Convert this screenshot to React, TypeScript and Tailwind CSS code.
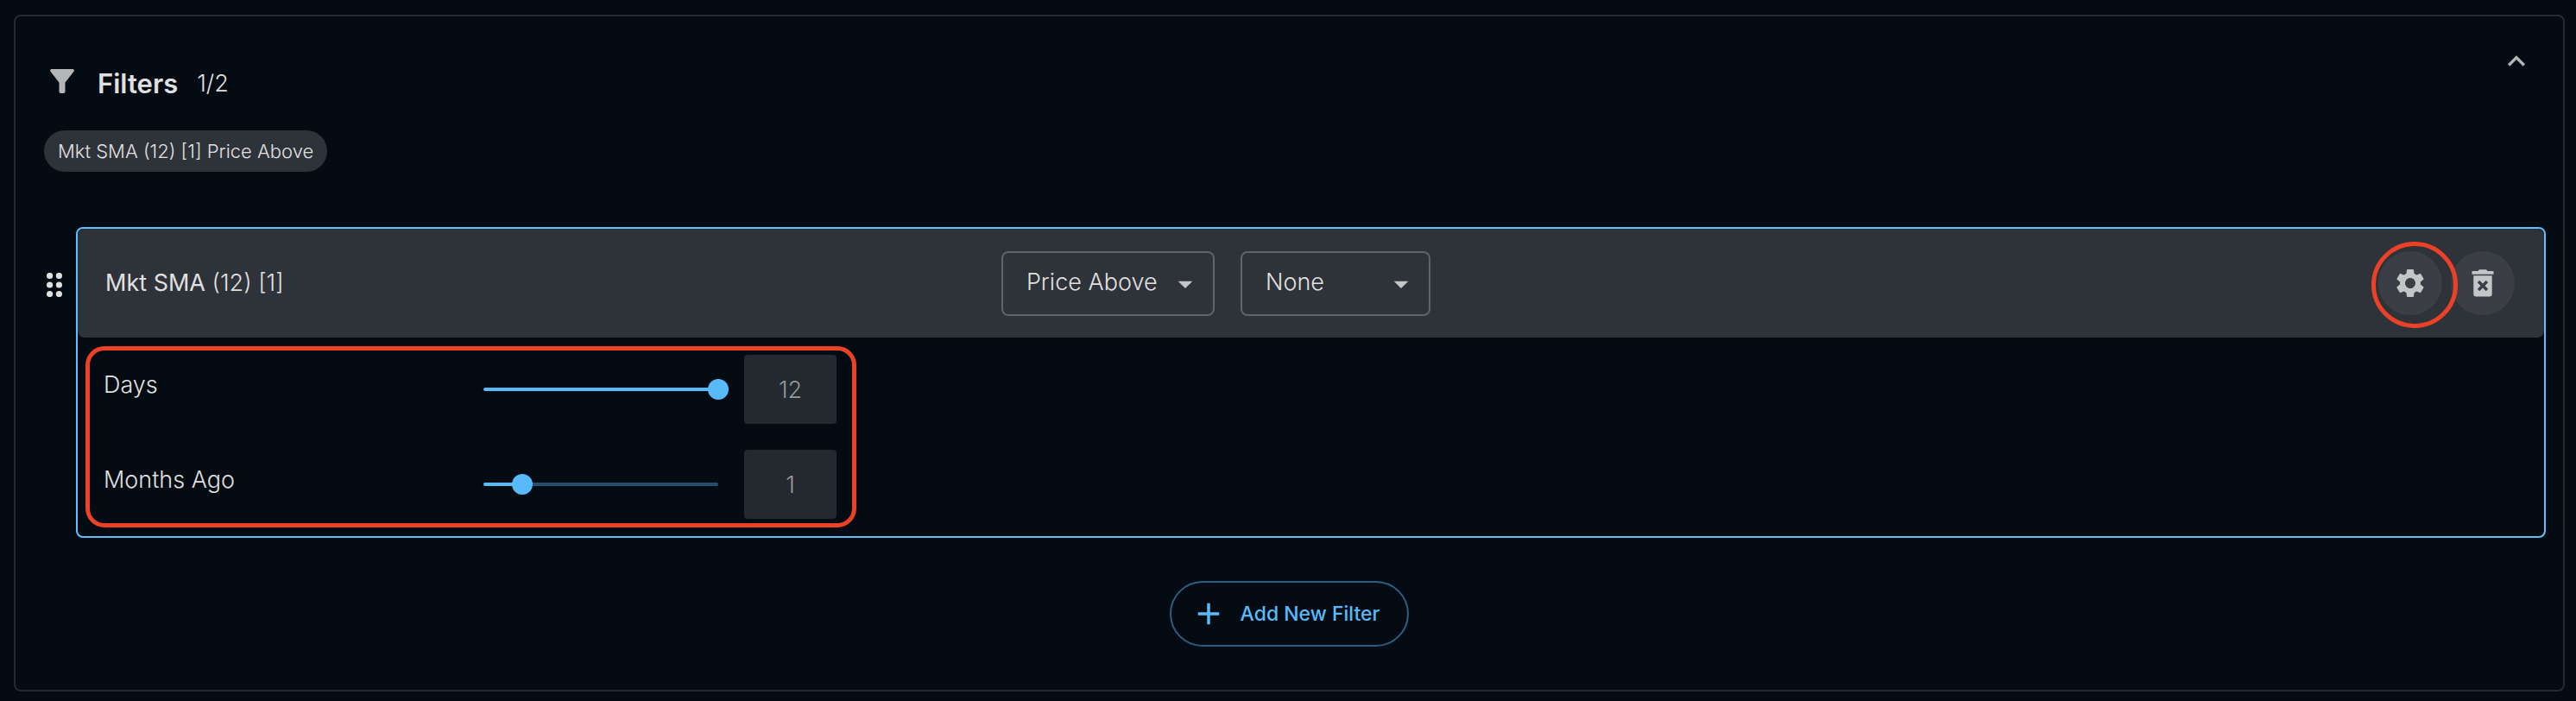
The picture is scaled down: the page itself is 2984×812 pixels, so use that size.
import { useState } from "react";
import { MdAdd, MdArrowDropDown, MdExpandLess, MdFilterAlt, MdSettings } from "react-icons/md";

interface ParamRowProps {
    id: string;
    label: string;
    value: number;
    max: number;
    onChange: (value: number) => void;
}

function ParamRow({ id, label, value, max, onChange }: ParamRowProps) {
    const fill = `${(value / max) * 100}%`;

    return (
        <div className="flex h-20 items-center">
            <label htmlFor={id} className="w-[428px] pb-2.5 text-[27px] leading-8">
                {label}
            </label>

            {/* Thumb overhangs the track by 12px on both sides */}
            <div className="relative flex h-6 w-[296px] items-center px-3">
                <div className="h-1 w-full overflow-hidden rounded-full bg-[#22506e]">
                    <div className="h-full bg-[#57bbfb]" style={{ width: fill }} />
                </div>
                <input
                    id={id}
                    type="range"
                    min={0}
                    max={max}
                    value={value}
                    onChange={(e) => onChange(Number(e.target.value))}
                    className="absolute inset-0 h-6 w-full cursor-pointer appearance-none bg-transparent [&::-webkit-slider-thumb]:size-6 [&::-webkit-slider-thumb]:appearance-none [&::-webkit-slider-thumb]:rounded-full [&::-webkit-slider-thumb]:bg-[#57bbfb]"
                />
            </div>

            <input
                type="text"
                aria-label={`${label} value`}
                value={value}
                disabled
                className="ml-[18px] h-20 w-[107px] rounded bg-[#23292f] text-center text-[27px] text-[#96999b]"
            />
        </div>
    );
}

interface SelectBoxProps {
    label: string;
    options: string[];
    className: string;
}

function SelectBox({ label, options, className }: SelectBoxProps) {
    return (
        <div className={`relative shrink-0 ${className}`}>
            <select
                aria-label={label}
                className="h-[75px] w-full appearance-none rounded-lg border-2 border-[#606367] bg-transparent pb-0.5 pl-[27px] text-[27px]"
            >
                {options.map((option) => (
                    <option key={option}>{option}</option>
                ))}
            </select>
            <MdArrowDropDown className="pointer-events-none absolute top-[18px] right-[14px] size-10 text-[#c4c5c6]" />
        </div>
    );
}

function DragHandle() {
    return (
        <svg viewBox="0 0 18 28" className="h-7 w-[18px]" fill="currentColor">
            {[3.5, 14, 24.5].map((y) => (
                <g key={y}>
                    <circle cx="3.6" cy={y} r="3.6" />
                    <circle cx="14.4" cy={y} r="3.6" />
                </g>
            ))}
        </svg>
    );
}

function TrashIcon() {
    return (
        <svg viewBox="0 0 26 32" className="h-8 w-[26px]">
            <path fill="currentColor" d="M.5 2h7L9 .3h8L18.5 2h7v3.8H.5z" />
            <path fill="currentColor" d="M2.3 7.3h21.4v21.2a3 3 0 0 1-3 3H5.3a3 3 0 0 1-3-3z" />
            <path stroke="#3b3f45" strokeWidth="3.4" d="m8 14 10 10m0-10-10 10" />
        </svg>
    );
}

export default function App() {
    const [days, setDays] = useState(12);
    const [monthsAgo, setMonthsAgo] = useState(1);

    return (
        <div className="min-h-screen bg-[#040b12] pt-[17px] pr-[13px] pb-[11px] pl-4 font-[Inter,sans-serif] font-light text-[#e0e0e0]">
            <section className="rounded-lg border-2 border-[#242b32] px-5 pt-9 pb-[50px]">
                {/* Header */}
                <header className="flex items-start justify-between pr-[14px] pl-[13px]">
                    <div className="flex items-center pt-[18px]">
                        <MdFilterAlt className="mb-1.5 size-[42px] text-[#b4b5b7]" />
                        <h2 className="ml-5 text-[31px] leading-[46px] font-semibold">Filters</h2>
                        <span className="ml-[22px] text-[27px] leading-8">1/2</span>
                    </div>
                    <button aria-label="Collapse filters" className="-mt-1 text-[#b4b5b7]">
                        <MdExpandLess className="size-10" />
                    </button>
                </header>

                <div className="mt-[30px] flex pl-[13px]">
                    <span className="flex h-12 items-center rounded-full bg-[#2e3239] px-4 text-[22px]">
                        Mkt SMA (12) [1] Price Above
                    </span>
                </div>

                {/* Filter card */}
                <div className="mt-16 flex items-start pl-[13px]">
                    <button aria-label="Reorder filter" className="mt-[53px] mr-4 ml-[3px]">
                        <DragHandle />
                    </button>

                    <article className="flex-1 rounded-lg border-2 border-[#5fc0fc] pb-2.5">
                        <div className="flex h-[126px] items-center rounded-lg bg-[#2e3239] pr-[34px]">
                            <h3 className="w-[37.9%] shrink-0 pl-8 text-[27px]">
                                <span className="font-normal">Mkt SMA</span> (12) [1]
                            </h3>
                            <SelectBox
                                label="Condition"
                                options={["Price Above", "Price Below"]}
                                className="w-[247px]"
                            />
                            <SelectBox label="Modifier" options={["None"]} className="ml-[30px] w-[220px]" />

                            <div className="ml-auto flex gap-2.5 text-[#c4c5c7]">
                                <div className="relative">
                                    <button
                                        aria-label="Filter settings"
                                        className="flex size-[74px] items-center justify-center rounded-full bg-[#3b3f45]"
                                    >
                                        <MdSettings className="size-10" />
                                    </button>
                                    <div className="pointer-events-none absolute -top-[11px] -left-2 z-10 size-[100px] rounded-full border-5 border-[#eb4126]" />
                                </div>
                                <button
                                    aria-label="Delete filter"
                                    className="flex size-[74px] items-center justify-center rounded-full bg-[#3b3f45]"
                                >
                                    <TrashIcon />
                                </button>
                            </div>
                        </div>

                        {/* Parameters */}
                        <div className="mt-2.5 ml-[9px] flex h-[210px] w-[893px] flex-col gap-[30px] rounded-[22px] border-5 border-[#eb4126] pt-[5px] pl-4">
                            <ParamRow id="days" label="Days" value={days} max={12} onChange={setDays} />
                            <ParamRow
                                id="months-ago"
                                label="Months Ago"
                                value={monthsAgo}
                                max={6}
                                onChange={setMonthsAgo}
                            />
                        </div>
                    </article>
                </div>

                <button className="mx-auto mt-[50px] flex h-[76px] items-center rounded-full border-2 border-[#2b5f82] pr-8 pl-[22px] text-[23px] font-medium text-[#57bbfb]">
                    <MdAdd className="mr-4 size-[42px]" />
                    Add New Filter
                </button>
            </section>
        </div>
    );
}
